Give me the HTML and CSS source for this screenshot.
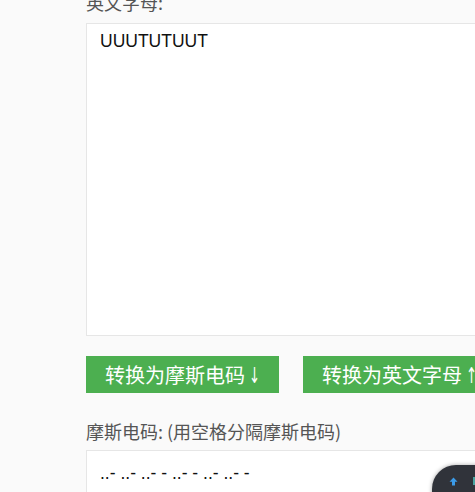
FILE: index.html
```html
<!DOCTYPE html>
<html lang="zh">
<head>
<meta charset="utf-8">
<title>摩斯电码转换</title>
<link rel="stylesheet" href="styles.css">
</head>
<body>
<div class="page">
  <label class="field-label" for="en">英文字母:</label>
  <textarea id="en" class="box box-tall" readonly>UUUTUTUUT</textarea>
  <div class="actions">
    <button class="btn" type="button">转换为摩斯电码 <span class="arrow">↓</span></button>
    <button class="btn" type="button">转换为英文字母 <span class="arrow">↑</span></button>
  </div>
  <label class="field-label field-label-2" for="morse">摩斯电码:&nbsp;(用空格分隔摩斯电码)</label>
  <textarea id="morse" class="box" readonly>..- ..- ..- - ..- - ..- ..- -</textarea>
</div>
<div class="float-tools">
  <svg class="up-icon" width="9" height="9" viewBox="0 0 9 9"><path d="M4.5 0.5 L8.5 4.8 H6 V8.5 H3 V4.8 H0.5 Z" fill="#3b9be8"/></svg>
  <span class="tool-dot"></span>
</div>
</body>
</html>
```

FILE: styles.css
```css
html, body {
  margin: 0;
  padding: 0;
  overflow: hidden;
  background: #fafafa;
}
.page {
  padding-left: 86px;
  margin-top: -10px;
  width: 600px;
  font-family: "Liberation Sans", "Noto Sans CJK SC", sans-serif;
}
.field-label {
  display: block;
  font-family: "Noto Sans CJK SC", "Liberation Sans", sans-serif;
  font-size: 18px;
  line-height: 24px;
  color: #555;
  margin-bottom: 9px;
}
.field-label-2 {
  margin-top: 26px;
  margin-bottom: 7px;
}
.box {
  display: block;
  box-sizing: border-box;
  width: 520px;
  height: 120px;
  margin: 0;
  padding: 10px 13px;
  border: 1px solid #e6e6e6;
  background: #fff;
  font-family: "Liberation Sans", sans-serif;
  font-size: 17.5px;
  line-height: 24px;
  color: #111;
  resize: none;
  outline: none;
}
.box-tall {
  height: 313px;
  padding-top: 5px;
}
.actions {
  display: flex;
  gap: 24px;
  margin-top: 20px;
}
.btn {
  box-sizing: border-box;
  width: 193px;
  height: 37px;
  padding: 0 0 0 19px;
  border: 0;
  background: #4caf50;
  color: #fff;
  font-family: "Noto Sans CJK SC", "Liberation Sans", sans-serif;
  font-size: 20px;
  line-height: 37px;
  text-align: left;
  white-space: nowrap;
  overflow: hidden;
  flex: none;
}
.arrow {
  font-family: "DejaVu Sans", sans-serif;
  font-size: 22px;
  line-height: 37px;
  display: inline-block;
  transform: scaleX(0.6);
  transform-origin: left center;
}
.float-tools {
  position: fixed;
  left: 432px;
  top: 465px;
  width: 90px;
  height: 60px;
  border-radius: 24px;
  background: #30333a;
  box-shadow: 0 0 4px rgba(0,0,0,0.35);
}
.up-icon {
  position: absolute;
  left: 17px;
  top: 12px;
}
.tool-dot {
  position: absolute;
  left: 41px;
  top: 12px;
  width: 4px;
  height: 8px;
  background: #4aa3a0;
}
```
